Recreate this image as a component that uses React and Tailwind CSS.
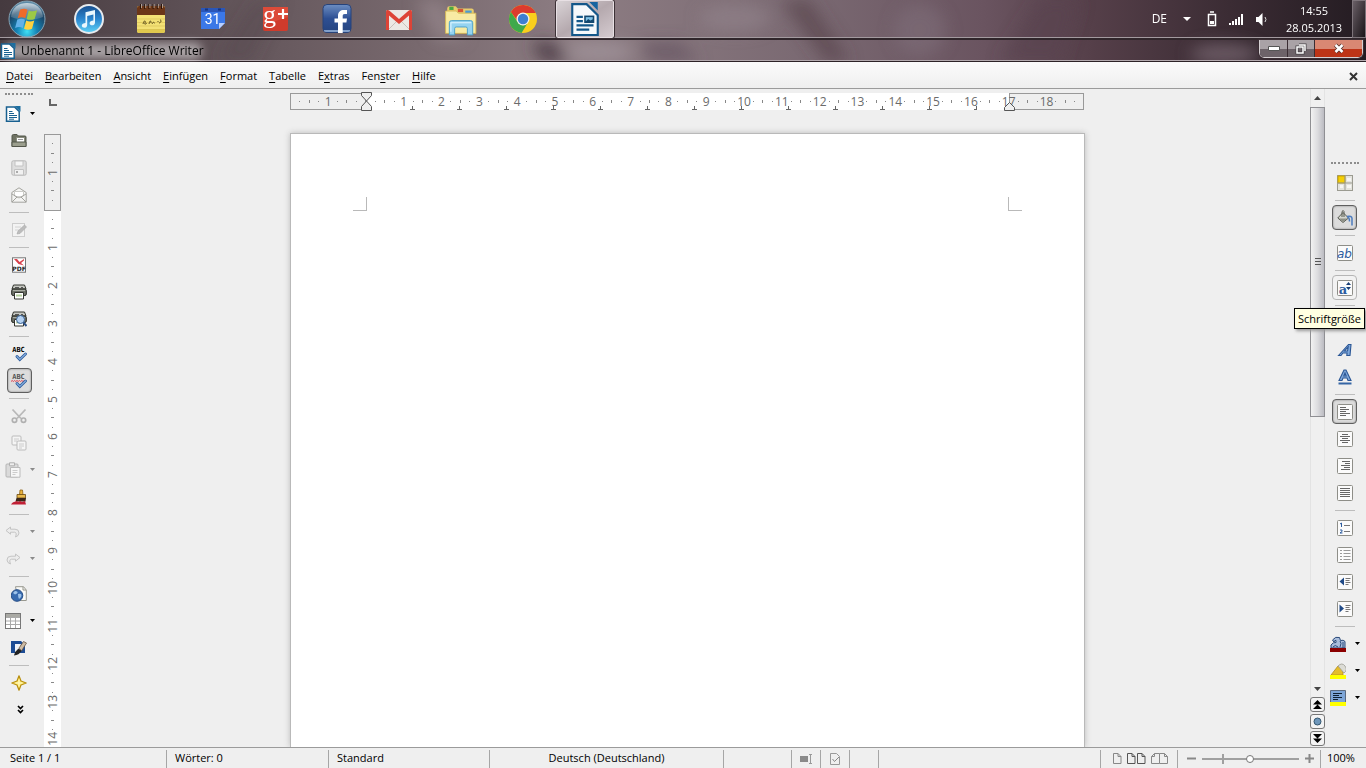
import React from 'react';

const menus = [
  ['', 'D', 'atei'],
  ['', 'B', 'earbeiten'],
  ['', 'A', 'nsicht'],
  ['', 'E', 'infügen'],
  ['', 'F', 'ormat'],
  ['', 'T', 'abelle'],
  ['E', 'x', 'tras'],
  ['Fen', 's', 'ter'],
  ['', 'H', 'ilfe'],
];

const Icon = ({ size = 16, children }) => (
  <svg width={size} height={size} viewBox="0 0 16 16" fill="none" className="shrink-0">
    {children}
  </svg>
);

const Big = ({ children, size = 32 }) => (
  <svg width={size} height={size} viewBox="0 0 32 32" fill="none" className="shrink-0">
    {children}
  </svg>
);

const WriterSmall = () => (
  <Icon>
    <path d="M1.500 1H9.500L14.200 5.500v9.700H1.500z" fill="#fff" stroke="#186090" strokeWidth="1.500" />
    <path d="M9.500 0H15.500v5.800z" fill="#1c6ea0" />
    <path d="M4 5.500h3.500M4 7.500h5M4 9.500h8M4 11.500h8M4 13.200h5" stroke="#186090" />
  </Icon>
);

/* taskbar */

const Orb = () => (
  <svg width="38" height="38" viewBox="0 0 38 38" className="shrink-0">
    <defs>
      <radialGradient id="orb" cx=".5" cy=".85" r=".8">
        <stop offset="0" stopColor="#3fe0f5" />
        <stop offset=".35" stopColor="#1583b5" />
        <stop offset=".75" stopColor="#1b4566" />
        <stop offset="1" stopColor="#5c8aa6" />
      </radialGradient>
      <linearGradient id="orbShine" x2="0" y2="1">
        <stop offset="0" stopColor="#fff" stopOpacity=".65" />
        <stop offset="1" stopColor="#fff" stopOpacity=".12" />
      </linearGradient>
    </defs>
    <circle cx="19" cy="19" r="18" fill="url(#orb)" stroke="#86a4b5" />
    <path d="M3 17C4 7 11 3 19 3s15 4 16 14c-9 4-23 4-32 0z" fill="url(#orbShine)" />
    <path d="M12.200 9.600c3-1.500 5.400-1 7.300.100l-2.200 8.600c-2.400-1.200-4.600-1.400-7.600 0z" fill="#ee6a2a" />
    <path d="M20.800 10.400c2.700 1.300 5.400 1 8.300-.200l-2.400 8.700c-2.700 1.200-5.500 1.300-8.100 0z" fill="#9bc945" />
    <path d="M9.300 19.600c2.800-1.300 5.400-1.200 7.700.100l-2.200 8.300c-2.500-1.300-4.900-1.300-7.700 0z" fill="#62b1e8" />
    <path d="M18.200 20.500c2.500 1.300 5.200 1.200 8.100 0L24 28.800c-2.700 1.300-5.500 1.200-8 0z" fill="#ffd23f" />
  </svg>
);

const ITunes = () => (
  <Big>
    <defs>
      <linearGradient id="tunes" x2="0" y2="1">
        <stop offset="0" stopColor="#164c8c" />
        <stop offset=".5" stopColor="#2b86cf" />
        <stop offset="1" stopColor="#5fd3f7" />
      </linearGradient>
    </defs>
    <circle cx="16" cy="16" r="14" fill="url(#tunes)" stroke="#e6eaee" strokeWidth="2" />
    <path d="M12.500 9.200 22 7v12.500c0 3.600-5.400 3.700-5.400.700 0-1.900 1.900-2.500 3.800-2.600v-6.100l-6.200 1.500v9c0 3.700-5.400 3.700-5.400.600 0-1.900 1.900-2.400 3.700-2.600z" fill="#eaf7fd" />
  </Big>
);

const Notes = () => (
  <Big>
    <rect x="2" y="3" width="28" height="27" rx="2" fill="#f3e175" />
    <path d="M2 26h28v2a2 2 0 0 1-2 2H4a2 2 0 0 1-2-2z" fill="#e1c94e" />
    <path d="M2 5a2 2 0 0 1 2-2h24a2 2 0 0 1 2 2v7H2z" fill="#6b3618" />
    <path d="M5.500 1v5M9.700 1v5M13.900 1v5M18.100 1v5M22.300 1v5M26.500 1v5" stroke="#2b1409" />
    <path d="M6.500 1v4M10.700 1v4M14.900 1v4M19.100 1v4M23.300 1v4M27.500 1v4" stroke="#d9c6b4" strokeWidth=".7" />
    <path d="M2 16h28M2 19.500h28M2 23h28M2 26.500h28" stroke="#d8c156" strokeWidth=".7" />
    <path d="M8 21c1-4 3-4 2-1-1 2 1 1 2 0m2 1c1-4 2-4 2-1m1 1c2-4 2 0 3-1m3-2v1m2-2c2 0 1 3-1 3" stroke="#524416" strokeWidth=".9" />
  </Big>
);

const Calendar = () => (
  <Big>
    <path d="M4 5h24v15l-6 6H4z" fill="#3b78e7" />
    <path d="M4 5h24v4H4z" fill="#2a56b8" />
    <path d="M8 6.500h3M21 6.500h3" stroke="#16357f" strokeWidth="2" />
    <path d="M28 20l-6 6v-6z" fill="#b9d0ff" />
    <text x="15.500" y="21" textAnchor="middle" fontSize="14" fontFamily="Roboto, sans-serif" fill="#fff">31</text>
  </Big>
);

const GPlus = () => (
  <Big>
    <path d="M4 4h25v22a2 2 0 0 1-2 2H6a2 2 0 0 1-2-2z" fill="#cf3b2c" />
    <path d="M4 4h25v10L4 22z" fill="#dc4b39" />
    <text x="4" y="20" fontSize="26" fontFamily="'Liberation Serif', serif" fill="#fff">g</text>
    <path d="M24 6v10M19 11h10" stroke="#fff" strokeWidth="2.200" />
  </Big>
);

const Facebook = () => (
  <Big>
    <defs>
      <linearGradient id="fb" x2="0" y2="1">
        <stop offset="0" stopColor="#6d8ec2" />
        <stop offset=".5" stopColor="#2d4f93" />
        <stop offset="1" stopColor="#24437f" />
      </linearGradient>
    </defs>
    <rect x="2" y="1.500" width="28" height="28" rx="4" fill="url(#fb)" stroke="#27437a" />
    <path d="M3 27h26v1q0 1-2 1H5q-2 0-2-1z" fill="#819fca" />
    <path d="M17 30V19.500h-3.500v-4H17V13c0-4.200 2.500-6 6-6h3v4h-2.300c-1.500 0-2 .700-2 2v2.500H26l-.6 4h-3.700V30z" fill="#fff" />
  </Big>
);

const Gmail = () => (
  <Big>
    <rect x="3" y="7" width="26" height="20" rx="2" fill="#ece8e4" />
    <path d="M5 27l9-9M27 27l-9-9" stroke="#c9c0bb" />
    <path d="M3 27V9c0-2 2-2.500 3.500-1.300L16 16l9.500-8.300C27 6.500 29 7 29 9v18h-3V12.500l-10 8.500L6 12.500V27z" fill="#dd4437" />
  </Big>
);

const Explorer = () => (
  <Big size={34}>
    <path d="M3 6q0-2 2-2h6l2 2h13q2 0 2 2v20H3z" fill="#e8cb6b" />
    <path d="M5 4.500h4v3H5z" fill="#49a942" />
    <path d="M13 6.500h5v3h-5z" fill="#d65535" />
    <path d="M20 8h6v3h-6z" fill="#4b9cd3" />
    <path d="M1.500 8.500h10l2 2h16.500v19H1.500z" fill="#f8eba3" stroke="#d6b752" strokeWidth=".8" />
    <path d="M5 31V19.500q0-2 2-2h18q2 0 2 2V31h-5v-6q0-1.500-1.500-1.500h-9Q10 23.500 10 25v6z" fill="#95d3f0" stroke="#4a9fca" strokeWidth=".9" />
    <path d="M6.500 28v-8.500h19" stroke="#e1f6ff" />
  </Big>
);

const Chrome = () => (
  <Big>
    <circle cx="16" cy="16" r="14" fill="#f9cf1d" />
    <path d="M3.900 9A14 14 0 0 1 28.700 10H16a6 6 0 0 0-5.500 8z" fill="#dc3b2e" />
    <path d="M3.900 9A14 14 0 0 0 14.500 30l6.500-10.500a6 6 0 0 1-10.300-.500z" fill="#3fa94b" />
    <circle cx="16" cy="16" r="6.500" fill="#f2f2ee" />
    <circle cx="16" cy="16" r="5.200" fill="#3e7fd1" />
  </Big>
);

const WriterBig = () => (
  <Big size={34}>
    <path d="M4 2h13.500L28 12.500V31H4z" fill="#f6f9fb" stroke="#14588a" strokeWidth="2" />
    <path d="M20 0h8v8z" fill="#1664a0" />
    <path d="M8 14h6M8 18h6M8 22h16M8 26h12" stroke="#14588a" strokeWidth="2" />
    <rect x="16" y="13.500" width="8" height="5.500" fill="#7fc2e6" stroke="#14486f" strokeWidth="1.500" />
    <path d="M16 19l3-3 2 1.500 3-1.500v3z" fill="#14486f" />
  </Big>
);

const taskIcons = [
  ['iTunes', ITunes],
  ['Notizen', Notes],
  ['Kalender', Calendar],
  ['Google+', GPlus],
  ['Facebook', Facebook],
  ['Gmail', Gmail],
  ['Explorer', Explorer],
  ['Chrome', Chrome],
];

const Wallpaper = () => (
  <svg className="absolute inset-0 h-full w-full" viewBox="0 0 1366 62" preserveAspectRatio="none" aria-hidden="true">
    <defs>
      <linearGradient id="sky">
        <stop offset="0" stopColor="#453a3f" />
        <stop offset=".12" stopColor="#5a4d52" />
        <stop offset=".3" stopColor="#77686d" />
        <stop offset=".42" stopColor="#8d7d83" />
        <stop offset=".6" stopColor="#796871" />
        <stop offset=".72" stopColor="#6a5460" />
        <stop offset=".8" stopColor="#553f49" />
        <stop offset=".9" stopColor="#3b2c34" />
        <stop offset="1" stopColor="#241c22" />
      </linearGradient>
      <filter id="soft" x="-50%" y="-50%" width="200%" height="200%">
        <feGaussianBlur stdDeviation="8" />
      </filter>
    </defs>
    <rect width="1366" height="62" fill="url(#sky)" />
    <g filter="url(#soft)">
      <path d="M215 62l40-62h26l-30 62z" fill="#50434a" opacity=".3" />
      <path d="M415 0h26l25 40h-30z" fill="#aa9aa0" opacity=".4" />
      <path d="M530 42h22l20 20h-30z" fill="#46363d" opacity=".8" />
      <ellipse cx="600" cy="52" rx="34" ry="10" fill="#a99da4" opacity=".6" />
      <ellipse cx="735" cy="18" rx="36" ry="14" fill="#93838c" opacity=".6" />
      <path d="M650 62l-10-20h40l20 20z" fill="#5f4f5d" opacity=".6" />
      <path d="M780 0h30l40 62h-24z" fill="#553f49" opacity=".6" />
      <ellipse cx="920" cy="30" rx="26" ry="26" fill="#81707b" opacity=".5" />
      <path d="M1000 62l40-62h40l-20 62z" fill="#58434e" opacity=".7" />
      <ellipse cx="1225" cy="54" rx="35" ry="10" fill="#8c7c85" opacity=".6" />
    </g>
  </svg>
);

const Taskbar = () => (
  <div className="relative flex h-[40px] items-center border-b-2 border-[#30262b] text-white shadow-[inset_0_-1px_0_#a39a9f]">
    <button className="flex w-[54px] justify-center" aria-label="Start">
      <Orb />
    </button>
    <div className="ml-1 flex">
      {taskIcons.map(([name, Pic]) => (
        <button key={name} aria-label={name} className="flex w-[62px] items-center justify-center">
          <Pic />
        </button>
      ))}
    </div>
    <button
      aria-label="LibreOffice Writer"
      className="ml-[2px] flex h-[38px] w-[58px] items-center justify-center rounded-xs border border-[#e8e0e4] bg-linear-to-br from-[#d9d3d6] via-[#b5a9ae] to-[#d5cbd0] outline outline-[#3c3136]"
    >
      <WriterBig />
    </button>
    <div className="ml-auto flex h-full items-center">
      <span className="mr-4 mb-px text-[12px]">DE</span>
      <svg width="8" height="4" className="mr-4"><path d="M0 0h8L4 4z" fill="#fff" /></svg>
      <svg width="10" height="16" viewBox="0 0 10 16" fill="none" className="mr-3">
        <path d="M3 1h4M1.500 3.500h7v11h-7z" stroke="#fff" strokeWidth="1.500" />
        <path d="M3 10h4v3H3z" fill="#fff" />
      </svg>
      <svg width="15" height="11" className="mr-3">
        <path d="M0 9h2v2H0zM3 7h2v4H3zM6 5h2v6H6zM9 3h2v8H9zM12 0h2v11h-2z" fill="#fff" />
      </svg>
      <svg width="12" height="13" fill="none">
        <path d="M0 4h2.500L6.500 0v13L2.500 9H0z" fill="#fff" />
        <path d="M9 4q2 2.500 0 5" stroke="#ddd" />
      </svg>
      <div className="ml-4 w-[60px] text-center text-[11px] leading-[17px]">
        <div>14:55</div>
        <div>28.05.2013</div>
      </div>
      <button aria-label="Desktop anzeigen" className="ml-2 h-full w-[14px] border border-[#7d747a] bg-linear-to-br from-[#6a6067] to-[#1c161a]" />
    </div>
  </div>
);

const TitleBar = () => (
  <div className="relative flex h-[22px] items-center border-b border-[#2e2328] shadow-[inset_0_-1px_0_#b3a9ae]">
    <div className="absolute top-[3px] left-1 h-4 w-[198px] rounded-full bg-white/50 blur-[5px]" />
    <div className="relative flex items-center gap-[5px] text-[12px] text-black">
      <WriterSmall />
      <h1>Unbenannt 1 - LibreOffice Writer</h1>
    </div>
    <div className="relative mr-[3px] ml-auto flex h-[18px] self-start overflow-hidden rounded-b-[5px] border border-t-0 border-[#d5cfd2] outline outline-[#3a2d33]">
      <button aria-label="Minimieren" className="flex w-[28px] items-center justify-center border-r border-[#3a2d33] bg-linear-to-b from-[#a9a2a6] from-50% to-[#6d6369] to-50%">
        <svg width="12" height="5"><path d="M.5.500h11v4H.500z" fill="#fff" stroke="#555" /></svg>
      </button>
      <button aria-label="Wiederherstellen" className="flex w-[27px] items-center justify-center border-r border-[#3a2d33] bg-linear-to-b from-[#a9a2a6] from-50% to-[#6d6369] to-50%">
        <svg width="12" height="12" fill="none">
          <path d="M4 2h6v6M2 4h6v6H2z" stroke="#454045" strokeWidth="3" />
          <path d="M4 2h6v6M2 4h6v6H2z" stroke="#fff" strokeWidth="1.500" />
        </svg>
      </button>
      <button aria-label="Schließen" className="flex w-[47px] items-center justify-center bg-linear-to-b from-[#d98873] from-50% to-[#bd3417] to-50%">
        <svg width="12" height="11" fill="none">
          <path d="M2.500 2l7 7M9.500 2l-7 7" stroke="#53302a" strokeWidth="4" />
          <path d="M2.500 2l7 7M9.500 2l-7 7" stroke="#fff" strokeWidth="2.500" />
        </svg>
      </button>
    </div>
  </div>
);

const MenuBar = () => (
  <nav className="flex h-[27px] shrink-0 items-center gap-3 border-b border-[#9b9b9b] bg-linear-to-b from-[#fbfbfb] to-[#efefef] px-[6px] pt-[2px] text-[11px]">
    {menus.map(([pre, key, post]) => (
      <button key={pre + key + post}>
        {pre}<u className="underline-offset-2">{key}</u>{post}
      </button>
    ))}
    <button aria-label="Dokument schließen" className="ml-auto">
      <svg width="9" height="9" className="mr-[2px]"><path d="M1 1l7 7M8 1L1 8" stroke="#333" strokeWidth="2" /></svg>
    </button>
  </nav>
);

/* toolbars */

const check = <path d="M6 10.500l2.800 3L14.500 8" stroke="#2b5a9c" strokeWidth="2.800" strokeLinecap="round" />;
const checkShine = <path d="M6 10.500l2.800 3L14.500 8" stroke="#85aede" strokeWidth="1.200" strokeLinecap="round" />;
const frame = <rect x=".5" y=".5" width="15" height="15" rx="1" fill="#fbfbfb" stroke="#8e8e88" />;
const abc = <text x="7.500" y="6" textAnchor="middle" fontSize="7" fontWeight="bold" fontFamily="'DejaVu Sans Mono', monospace" fill="currentColor">ABC</text>;
const printer = (
  <>
    <path d="M2.500 1h11l1.500 4H1z" fill="#c6c8c2" stroke="#33352f" />
    <path d="M4 3.500h4M10 3.500h2" stroke="#555" />
    <rect x=".7" y="5" width="14.600" height="6.500" rx="1.500" fill="#6f736a" stroke="#22241f" />
    <path d="M2 6.500h12" stroke="#a9aca3" />
    <path d="M3.500 8.500h9v6.500h-9z" fill="#fff" stroke="#33352f" />
    <path d="M5 11.500h6" stroke="#b5cf9d" strokeWidth="2" />
  </>
);

const OpenIcon = () => (
  <Icon>
    <path d="M1 3q0-1.500 1.500-1.500H6L7.500 3H14q1 0 1 1v9.500H1z" fill="#6f7263" stroke="#53564a" />
    <path d="M5.500 4.500h8v5h-8z" fill="#fff" stroke="#8a8d7e" />
    <path d="M7 6.500h5" stroke="#999" />
    <path d="M1 9h14v4.500H1z" fill="#9b9e8d" stroke="#53564a" />
  </Icon>
);
const SaveIcon = () => (
  <Icon>
    <rect x=".8" y=".8" width="14.400" height="14.400" rx="1.500" fill="#dedede" stroke="#b9b9b9" />
    <path d="M4 1h8v5H4z" fill="#f5f5f5" stroke="#c2c2c2" />
    <path d="M3.500 9.500h9v5.500h-9z" fill="#f1f1f1" stroke="#c2c2c2" />
    <path d="M5 12h2" stroke="#aaa" strokeWidth="2" />
  </Icon>
);
const MailIcon = () => (
  <Icon>
    <path d="M.800 5.500L8 .800l7.200 4.700v9.700H.800z" fill="#f4f4f2" stroke="#a3a39e" />
    <path d="M3.500 4.500h9V9L8 11 3.500 9z" fill="#fff" stroke="#cbcbc7" />
    <path d="M1 15l5-5h4l5 5M1 7l5 3M15 7l-5 3" stroke="#a3a39e" />
  </Icon>
);
const EditIcon = () => (
  <Icon>
    <rect x="1.500" y="1.500" width="12" height="13" fill="#f3f3f3" stroke="#cdcdcd" />
    <path d="M4 5h6M4 8h4" stroke="#d2d2d2" />
    <path d="M6 12l1-3 6.500-6 2 2L9 11.500z" fill="#bcbcbc" stroke="#a8a8a8" strokeWidth=".6" />
  </Icon>
);
const PdfIcon = () => (
  <Icon>
    <rect x="1.500" y=".8" width="13" height="14.400" fill="#fff" stroke="#777" />
    <path d="M3 2h3l2.500 3L13 2v1.500L10 6l3 2.500L7.500 7z" fill="#d8424d" />
    <text x="8" y="14" textAnchor="middle" fontSize="6" fontWeight="bold" fontFamily="'DejaVu Sans', sans-serif" fill="#222">PDF</text>
  </Icon>
);
const PrintIcon = () => <Icon>{printer}</Icon>;
const PreviewIcon = () => (
  <Icon>
    {printer}
    <circle cx="9.500" cy="8.500" r="4" fill="#b5d2f2" stroke="#3a6296" />
    <path d="M12.500 11.500l3 3.500" stroke="#2b4f84" strokeWidth="2" />
  </Icon>
);
const SpellIcon = () => <Icon>{abc}{check}{checkShine}</Icon>;
const AutoSpellIcon = () => (
  <Icon>
    {abc}
    <path d="M0 8.500l1.200-1 1.200 1 1.200-1 1.200 1 1.200-1 1.200 1 1.200-1 1.200 1 1.200-1 1.200 1 1.200-1" stroke="#e04050" />
    {check}{checkShine}
  </Icon>
);
const CutIcon = () => (
  <Icon>
    <path d="M1.500 1.500l8.500 9M14.500 1.500L6 10.500" stroke="#b8b8b8" strokeWidth="1.800" />
    <circle cx="3.500" cy="12.200" r="2.200" stroke="#b0b0b0" strokeWidth="1.700" />
    <circle cx="12.500" cy="12.200" r="2.200" stroke="#b0b0b0" strokeWidth="1.700" />
  </Icon>
);
const CopyIcon = () => (
  <Icon>
    <rect x="1" y="1" width="9" height="9" rx="1" fill="#f5f5f5" stroke="#bbb" />
    <path d="M3 4h5M3 6h3" stroke="#ccc" />
    <rect x="6" y="6" width="9" height="9" rx="1" fill="#f5f5f5" stroke="#bbb" />
    <path d="M8 9h5M8 11h5M8 13h3" stroke="#ccc" />
  </Icon>
);
const PasteIcon = () => (
  <Icon>
    <rect x="1" y="2" width="12" height="13" rx="1" fill="#dadada" stroke="#b5b5b5" />
    <path d="M4.500.800h5v3h-5z" fill="#eee" stroke="#b0b0b0" />
    <path d="M5.500 5.500h9.500v9.700H5.500z" fill="#f7f7f7" stroke="#bbb" />
    <path d="M7.500 8.500h5M7.500 10.500h5M7.500 12.500h3" stroke="#ccc" />
  </Icon>
);
const BrushIcon = () => (
  <Icon>
    <path d="M9 1h2.500l.500 5H8.500z" fill="#eab23a" stroke="#8a6116" strokeWidth=".8" />
    <path d="M6 5.500h8.500V9H6z" fill="#e9b94c" stroke="#6b4a12" strokeWidth=".8" />
    <path d="M5.500 9h9.500l-.500 3.500h-10z" fill="#3b2618" />
    <path d="M0 15.500c2-3 4-2.500 6-3.500l1 1 2-1 2 1 3-1 1 3.500z" fill="#c11f35" />
  </Icon>
);
const UndoIcon = () => (
  <Icon>
    <path d="M1 6.500L5.500 3v2.200H10q4 0 4 3.800-.200 3-3.500 4 1.800-4.500-1-4.800h-4v2z" fill="#ececec" stroke="#c4c4c4" />
  </Icon>
);
const RedoIcon = () => (
  <Icon>
    <path d="M15 6.500L10.500 3v2.200H6Q2 5.200 2 9q.200 3 3.500 4-1.800-4.500 1-4.800h4v2z" fill="#ececec" stroke="#c4c4c4" />
  </Icon>
);
const LinkIcon = () => (
  <Icon>
    <path d="M4.500.700h8L15.300 4v10.500h-8z" fill="#fbfbf8" stroke="#98988f" />
    <path d="M12 .700V4h3" stroke="#98988f" />
    <circle cx="6" cy="9.500" r="5.800" fill="#386bb0" stroke="#234b85" />
    <path d="M2 7q2-3 4-1.500t-2 3zM7 8q3-1 3.500 1T8 13q-1-2-1-5z" fill="#9ec3ea" />
  </Icon>
);
const TableIcon = () => (
  <Icon>
    <rect x=".5" y=".5" width="15" height="15" fill="#fff" stroke="#777" />
    <path d="M1 1h14v3H1z" fill="#a9a9a4" />
    <path d="M1 4.500h14M1 8h14M1 11.500h14M5.500 4v11M10.500 4v11" stroke="#aaa" />
  </Icon>
);
const DrawIcon = () => (
  <Icon>
    <path d="M0 1h10l4 4v8H0z" fill="#1d4c94" />
    <path d="M4 4h6l-2 8H4z" fill="#f0f3f8" />
    <path d="M8 8l4.500-6.500L15.500 3l-5 8z" fill="#cdbba5" stroke="#604c38" strokeWidth=".7" />
    <path d="M3 15.500Q4 11 7.500 8.500l3 2.500Q8 15 3 15.500z" fill="#222" />
  </Icon>
);
const StarIcon = () => (
  <Icon>
    <path d="M8 .800L10 6l5.200 2L10 10l-2 5.200L6 10 .800 8 6 6z" fill="#ffe96b" stroke="#b88f11" strokeWidth="1.200" strokeLinejoin="round" />
    <path d="M8 4.500v7M4.500 8h7" stroke="#fffbd0" />
  </Icon>
);
const MoreIcon = () => (
  <Icon>
    <path d="M7 4l2.500 2.500L12 4M7 8l2.500 2.500L12 8" stroke="#000" strokeWidth="1.700" />
  </Icon>
);

const StylesIcon = () => (
  <Icon>
    <rect x=".5" y=".5" width="15" height="15" fill="#e4e4de" stroke="#9b9b91" />
    <path d="M1 1h7v7H1z" fill="#f5cf05" stroke="#c9a300" />
    <path d="M8 1v14M1 8h14" stroke="#9b9b91" />
    <path d="M10 3h4v3h-4zM3 10h3v3H3zM10 10h4v3h-4z" fill="#f6f6f4" />
  </Icon>
);
const BucketIcon = () => (
  <Icon>
    <path d="M6 2.500L11.500 8 6 12.500.800 8z" fill="#d4d6ce" stroke="#55584f" />
    <path d="M1.500 8.500h9L6 12z" fill="#8d9086" />
    <path d="M5 7V1.500q1.500-2 2 0V7" stroke="#55584f" />
    <path d="M10 6.500q5-1 5 2v7M10 6.500q2.500.500 2.500 5" stroke="#4b7bbd" strokeWidth="1.500" />
  </Icon>
);
const CharIcon = () => (
  <Icon>
    {frame}
    <text x="7.500" y="12.500" textAnchor="middle" fontSize="12" fontStyle="italic" fontFamily="'DejaVu Sans', sans-serif" fill="#2c5c9f">ab</text>
  </Icon>
);
const SizeIcon = () => (
  <Icon>
    {frame}
    <text x="6" y="13.500" textAnchor="middle" fontSize="13" fontWeight="bold" fontFamily="'DejaVu Serif', serif" fill="#2c5c9f">a</text>
    <path d="M9 5l2.500-3L14 5zM9 7h5l-2.500 3z" fill="#173f77" />
  </Icon>
);
const BoldIcon = () => (
  <Icon>
    <path d="M2.500 13.500L7 2h2l4.500 11.500H11L10 11H6l-1 2.500z" fill="#7fa8db" stroke="#204a87" strokeWidth="1.500" />
  </Icon>
);
const ItalicIcon = () => (
  <Icon>
    <path d="M1.500 13.500L11.500 2.500h2.500L13 13.500H9.800l.300-2.500H6L4 13.500zM7.500 9h3l.700-4z" fill="#7fa8db" stroke="#2a5695" strokeWidth="1.100" fillRule="evenodd" />
  </Icon>
);
const UnderlineIcon = () => (
  <Icon>
    <path d="M2 11.500L7 1h2l5 10.500H11L10 9H6l-1 2.500zM6.800 7h2.400L8 4z" fill="#7fa8db" stroke="#2a5695" strokeWidth="1.100" fillRule="evenodd" />
    <path d="M1.500 14.500h13" stroke="#3465a4" strokeWidth="2" />
  </Icon>
);
const AlignLeftIcon = () => <Icon>{frame}<path d="M3 3.500h6M3 5.500h9M3 7.500h6M3 9.500h10M3 11.500h6" stroke="#666" /></Icon>;
const AlignCenterIcon = () => <Icon>{frame}<path d="M5 3.500h6M3 5.500h10M5 7.500h6M3 9.500h10M5 11.500h6" stroke="#666" /></Icon>;
const AlignRightIcon = () => <Icon>{frame}<path d="M5 3.500h8M8 5.500h5M4 7.500h9M7 9.500h6M4 11.500h9" stroke="#666" /></Icon>;
const JustifyIcon = () => <Icon>{frame}<path d="M3 3.500h10M3 5.500h10M3 7.500h10M3 9.500h10M3 11.500h10" stroke="#666" /></Icon>;
const NumberedIcon = () => (
  <Icon>
    {frame}
    <path d="M3 4l1.500-1v4M3 10h2v1.500L3 13h2.500" stroke="#2c5c9f" />
    <path d="M7 5.500h6M7 11.500h6" stroke="#777" />
  </Icon>
);
const BulletIcon = () => (
  <Icon>
    {frame}
    <path d="M3 3.500h2M3 6.500h2M3 9.500h2M3 12.500h2M6.500 3.500h7M6.500 6.500h7M6.500 9.500h7M6.500 12.500h7" stroke="#999" />
  </Icon>
);
const OutdentIcon = () => (
  <Icon>
    {frame}
    <path d="M7 3.500v8L2.500 7.500z" fill="#204a87" />
    <path d="M8.500 4.500h5M8.500 6.500h4M8.500 8.500h5M8.500 10.500h3" stroke="#777" />
  </Icon>
);
const IndentIcon = () => (
  <Icon>
    {frame}
    <path d="M2.500 3.500v8L7 7.500z" fill="#204a87" />
    <path d="M8.500 4.500h5M8.500 6.500h4M8.500 8.500h5M8.500 10.500h3" stroke="#777" />
  </Icon>
);
const FontColorIcon = () => (
  <Icon>
    <path d="M1 12V9q2-3 5-2.500V4.500Q4.500 4 4 6L2.500 4q3-4 7-2.500l1 3q3-1 4.500 1v6.500z" fill="#a9bddb" stroke="#2a4a7a" />
    <path d="M3 11q2-3 5 0M10 5q2 2 0 6M13 6v6" stroke="#2a4a7a" />
    <path d="M0 12h16v4H0z" fill="#8b0000" />
  </Icon>
);
const HighlightIcon = () => (
  <Icon>
    <path d="M1 12l7-9 5 4v5z" fill="#e5bd2b" stroke="#b28c1a" strokeWidth=".8" />
    <path d="M8 3q4-4 7 0t-1 7z" fill="#dcdcd6" stroke="#9a9a92" strokeWidth=".8" />
    <path d="M0 12h16v4H0z" fill="#ffff00" />
  </Icon>
);
const BackgroundIcon = () => (
  <Icon>
    <path d="M.500.500h15v12H.500z" fill="#7ea6d8" stroke="#5c6b80" />
    <path d="M3 3.500h9M3 5.500h6M3 7.500h9M3 9.500h5" stroke="#123" />
    <path d="M0 12h16v4H0z" fill="#ffff00" />
  </Icon>
);

const leftTools = [
  { name: 'Neu', icon: WriterSmall, drop: true },
  { name: 'Öffnen', icon: OpenIcon },
  { name: 'Speichern', icon: SaveIcon, off: true },
  { name: 'E-Mail', icon: MailIcon },
  null,
  { name: 'Bearbeiten', icon: EditIcon, off: true },
  null,
  { name: 'PDF exportieren', icon: PdfIcon },
  { name: 'Drucken', icon: PrintIcon },
  { name: 'Seitenansicht', icon: PreviewIcon },
  null,
  { name: 'Rechtschreibung', icon: SpellIcon },
  { name: 'Automatische Prüfung', icon: AutoSpellIcon, active: true },
  null,
  { name: 'Ausschneiden', icon: CutIcon, off: true },
  { name: 'Kopieren', icon: CopyIcon, off: true },
  { name: 'Einfügen', icon: PasteIcon, drop: true, off: true },
  { name: 'Format übertragen', icon: BrushIcon },
  null,
  { name: 'Rückgängig', icon: UndoIcon, drop: true, off: true },
  { name: 'Wiederherstellen', icon: RedoIcon, drop: true, off: true },
  null,
  { name: 'Hyperlink', icon: LinkIcon },
  { name: 'Tabelle', icon: TableIcon, drop: true },
  { name: 'Zeichenfunktionen', icon: DrawIcon },
  null,
  { name: 'Navigator', icon: StarIcon },
  { name: 'Mehr', icon: MoreIcon },
];

const rightTools = [
  { name: 'Formatvorlagen', icon: StylesIcon },
  null,
  { name: 'Gießkanne', icon: BucketIcon, active: true },
  null,
  { name: 'Schriftart', icon: CharIcon },
  null,
  { name: 'Schriftgröße', icon: SizeIcon, hover: true },
  null,
  { name: 'Fett', icon: BoldIcon },
  { name: 'Kursiv', icon: ItalicIcon },
  { name: 'Unterstrichen', icon: UnderlineIcon },
  null,
  { name: 'Linksbündig', icon: AlignLeftIcon, active: true },
  { name: 'Zentriert', icon: AlignCenterIcon },
  { name: 'Rechtsbündig', icon: AlignRightIcon },
  { name: 'Blocksatz', icon: JustifyIcon },
  null,
  { name: 'Nummerierung', icon: NumberedIcon },
  { name: 'Aufzählung', icon: BulletIcon },
  { name: 'Einzug verkleinern', icon: OutdentIcon },
  { name: 'Einzug vergrößern', icon: IndentIcon },
  null,
  { name: 'Schriftfarbe', icon: FontColorIcon, drop: true },
  { name: 'Hervorheben', icon: HighlightIcon, drop: true },
  { name: 'Hintergrundfarbe', icon: BackgroundIcon, drop: true },
];

const Tool = ({ name, icon: Pic, drop, off, active, hover }) => {
  if (drop) {
    return (
      <div className="flex h-[27px] w-full items-center">
        <button aria-label={name} disabled={off} className="flex w-[26px] justify-center"><Pic /></button>
        <button aria-label={name + ' Auswahl'} disabled={off} className={off ? 'flex flex-1 justify-center text-[#8a8a8a]' : 'flex flex-1 justify-center text-black'}>
          <svg width="5" height="3"><path d="M0 0h5L2.500 3z" fill="currentColor" /></svg>
        </button>
      </div>
    );
  }
  let look = 'border-transparent';
  if (active) look = 'border-[#5f5f5f] bg-[#dcdcdc] text-[#555] shadow-[inset_0_0_2px_#777]';
  if (hover) look = 'border-[#b5b5b5] bg-[#f2f2f2]';
  return (
    <div className="flex h-[27px] items-center">
      <button aria-label={name} disabled={off} className={'flex size-[25px] items-center justify-center rounded border ' + look}>
        <Pic />
      </button>
    </div>
  );
};

const Tools = ({ items }) => (
  <>
    <div className="h-[11px] w-[28px] pt-1">
      <div className="border-t-2 border-dotted border-[#8d8d8d]" />
    </div>
    {items.map((t, i) =>
      t ? (
        <Tool key={i} {...t} />
      ) : (
        <div key={i} className="flex h-2 items-center">
          <div className="h-px w-5 bg-[#bdbdbd]" />
        </div>
      )
    )}
  </>
);

/* rulers: one mark every quarter of a centimetre, zero lies 2 cm in */

const marks = (count, last) =>
  Array.from({ length: count }, (_, i) => {
    const q = i + 1;
    const cm = Math.abs(q / 4 - 2);
    if (q % 4 === 0) return cm === 0 || cm > last ? '' : String(cm);
    return q % 2 === 0 ? '|' : '.';
  });

const HRuler = () => (
  <div className="relative flex h-[17px] w-[794px] shrink-0">
    <div className="w-[76px] border border-[#999]" />
    <div className="flex flex-1 items-end bg-white">
      {Array.from({ length: 14 }, (_, i) => (
        <svg key={i} width="47" height="4" className="shrink-0" stroke="#666">
          {i < 13 && <path d="M44 3.500h3M46.500 0v3" />}
          {i > 0 && <path d="M0 3.500h2" />}
        </svg>
      )).slice(0, 13)}
    </div>
    <div className="w-[75px] border border-[#999]" />
    <div className="absolute inset-0 flex items-center px-[5px] text-[12px] text-[#6b6b6b]">
      {marks(83, 18).map((m, i) => (
        <span key={i} className="flex min-w-0 flex-1 justify-center">
          {m === '|' ? <i className="h-[3px] w-px bg-[#888]" /> : m === '.' ? <i className="size-px bg-[#888]" /> : m}
        </span>
      ))}
    </div>
    <svg width="11" height="20" className="absolute -top-px left-[71px]" fill="#efefef" stroke="#555">
      <path d="M.500.500h10v3L5.500 9 .500 3.500z" />
      <path d="M.500 18.500h10v-4L5.500 9l-5 5.500z" />
    </svg>
    <svg width="11" height="9" className="absolute right-[69px] -bottom-px" fill="#efefef" stroke="#555">
      <path d="M.500 8.500h10v-3l-5-5-5 5z" />
    </svg>
  </div>
);

const VRuler = () => (
  <div className="flex w-[17px] shrink-0 flex-col overflow-hidden">
    <div className="h-[45px] shrink-0 pt-[10px] pl-[5px]">
      <svg width="8" height="7"><path d="M1 0v6h7" stroke="#666" strokeWidth="2" fill="none" /></svg>
    </div>
    <div className="relative flex h-[1134px] shrink-0 flex-col">
      <div className="h-[77px] border border-[#999]" />
      <div className="flex-1 bg-white" />
      <div className="absolute inset-0 flex flex-col items-center py-[5px] text-[12px] leading-[17px] text-[#6b6b6b]">
        {marks(119, 14).map((m, i) => (
          <span key={i} className="flex min-h-0 flex-1 items-center justify-center">
            {m === '|' ? (
              <i className="h-px w-[3px] bg-[#888]" />
            ) : m === '.' ? (
              <i className="size-px bg-[#888]" />
            ) : (
              <b className="rotate-180 font-normal [writing-mode:vertical-rl]">{m}</b>
            )}
          </span>
        ))}
      </div>
    </div>
  </div>
);

const navButton = 'flex size-[15px] items-center justify-center rounded-[3px] border border-[#777] bg-[#f4f4f4]';

const ScrollBar = () => (
  <div className="flex w-[15px] shrink-0 flex-col items-center border-x border-[#e3e3e3] bg-[#f0f0f0]">
    <button aria-label="Nach oben" className="flex h-[18px] items-center">
      <svg width="7" height="4"><path d="M0 4h7L3.500 0z" fill="#444" /></svg>
    </button>
    <div className="min-h-0 w-[15px] flex-1">
      <div className="flex h-[54%] flex-col items-center justify-center gap-[2px] border border-[#8f8f93] bg-linear-to-r from-[#f2f2f2] via-[#dcdcdf] to-[#bcbcc2]">
        <div className="h-px w-[6px] bg-[#555]" />
        <div className="h-px w-[6px] bg-[#555]" />
        <div className="h-px w-[6px] bg-[#555]" />
      </div>
    </div>
    <button aria-label="Nach unten" className="flex h-[16px] items-center">
      <svg width="7" height="4"><path d="M0 0h7L3.500 4z" fill="#444" /></svg>
    </button>
    <div className="flex flex-col gap-[2px] pb-px">
      <button aria-label="Vorherige Seite" className={navButton}>
        <svg width="9" height="9"><path d="M0 4.500h9L4.500 0zM0 9h9L4.500 4.500z" fill="#000" /></svg>
      </button>
      <button aria-label="Navigation" className={navButton}>
        <svg width="9" height="9"><circle cx="4.500" cy="4.500" r="3.500" fill="#6e97bb" stroke="#35566f" /></svg>
      </button>
      <button aria-label="Nächste Seite" className={navButton}>
        <svg width="9" height="9"><path d="M0 0h9L4.500 4.500zM0 4.500h9L4.500 9z" fill="#000" /></svg>
      </button>
    </div>
  </div>
);

const StatusBar = () => (
  <footer className="flex h-[21px] shrink-0 items-center border-t border-[#9b9b9b] bg-[#efefef] pt-px text-[11px] whitespace-nowrap *:flex *:h-[18px] *:shrink-0 *:items-center">
    <div className="w-[167px] border-r border-[#a6a6a6] pl-[10px]">Seite 1 / 1</div>
    <div className="w-[162px] border-r border-[#a6a6a6] pl-2">Wörter: 0</div>
    <div className="w-[161px] border-r border-[#a6a6a6] pl-2">Standard</div>
    <div className="w-[234px] justify-center border-r border-[#a6a6a6]">Deutsch (Deutschland)</div>
    <div className="w-[68px] border-r border-[#a6a6a6]" />
    <div className="w-[29px] justify-center border-r border-[#a6a6a6]">
      <svg width="12" height="10"><path d="M0 2h8v6H0z" fill="#8a8a8a" /><path d="M9 .500h3M9 9.500h3M10.500 0v9" stroke="#999" /></svg>
    </div>
    <div className="w-[29px] justify-center border-r border-[#a6a6a6]">
      <svg width="10" height="12" fill="none"><path d="M.500.500h6l3 3v8h-9z" stroke="#999" /><path d="M2.500 6l2 2.500L9 4" stroke="#888" /></svg>
    </div>
    <div className="w-[29px] border-r border-[#a6a6a6]" />
    <div className="ml-auto gap-[5px] border-r border-l border-[#a6a6a6] pr-[9px] pl-3">
      <svg width="9" height="11" fill="none" stroke="#888"><path d="M.500.500h4.500l3 3v7H.500zM5 .500v3h3" /></svg>
      <svg width="19" height="11" fill="none" stroke="#555"><path d="M.500.500h4.500l3 3v7H.500zM5 .500v3h3M10.500.500h4.500l3 3v7h-7.500zM15 .500v3h3" /></svg>
      <svg width="17" height="11" fill="none" stroke="#888"><path d="M8.500.500v10h-8v-7l3-3zM3.500.500v3h-3M8.500.500h5l3 3v7h-8M13.500.500v3h3" /></svg>
    </div>
    <div className="gap-[6px] border-r border-[#a6a6a6] pr-[6px] pl-[9px]">
      <button aria-label="Verkleinern"><svg width="9" height="9"><path d="M0 4.500h9" stroke="#888" strokeWidth="2" /></svg></button>
      <div className="relative flex h-3 items-center">
        <div className="absolute left-5 h-[10px] w-[2px] bg-[#a0a0a0]" />
        <input
          type="range"
          aria-label="Maßstab"
          defaultValue="49"
          className="relative h-2 w-[97px] appearance-none bg-transparent [&::-webkit-slider-runnable-track]:h-[2px] [&::-webkit-slider-runnable-track]:bg-[#a0a0a0] [&::-webkit-slider-thumb]:-mt-[3px] [&::-webkit-slider-thumb]:size-2 [&::-webkit-slider-thumb]:appearance-none [&::-webkit-slider-thumb]:rounded-full [&::-webkit-slider-thumb]:border [&::-webkit-slider-thumb]:border-[#777] [&::-webkit-slider-thumb]:bg-white"
        />
      </div>
      <button aria-label="Vergrößern"><svg width="9" height="9"><path d="M0 4.500h9M4.500 0v9" stroke="#888" strokeWidth="2" /></svg></button>
    </div>
    <div className="w-[45px] pl-[6px]">100%</div>
  </footer>
);

const App = () => {
  return (
    <div className="flex h-screen flex-col overflow-hidden bg-[#efefef] font-['Open_Sans',sans-serif] text-black">
      <header className="relative shrink-0">
        <Wallpaper />
        <Taskbar />
        <TitleBar />
      </header>
      <MenuBar />
      <div className="flex min-h-0 flex-1">
        <aside className="mr-[6px] flex w-[38px] shrink-0 flex-col items-center">
          <Tools items={leftTools} />
        </aside>
        <VRuler />
        <main className="flex min-w-0 flex-1 flex-col items-center overflow-hidden pt-1 pl-[3px]">
          <HRuler />
          <div className="mt-[23px] flex w-[795px] flex-1 justify-between border border-b-0 border-[#b9b9b9] bg-white px-[62px] pt-[63px] shadow-[0_0_6px_#bbb]">
            <div className="size-[14px] border-r border-b border-[#b9b9b9]" />
            <div className="size-[14px] border-b border-l border-[#b9b9b9]" />
          </div>
        </main>
        <ScrollBar />
        <aside className="relative flex w-[41px] shrink-0 flex-col items-center pt-[69px] pr-[2px]">
          <Tools items={rightTools} />
          <div role="tooltip" className="absolute top-[219px] right-px border border-black bg-[#ffffe1] px-[3px] text-[11px] leading-[19px] whitespace-nowrap shadow-[2px_2px_3px_#999]">
            Schriftgröße
          </div>
        </aside>
      </div>
      <StatusBar />
    </div>
  );
};

export default App;
